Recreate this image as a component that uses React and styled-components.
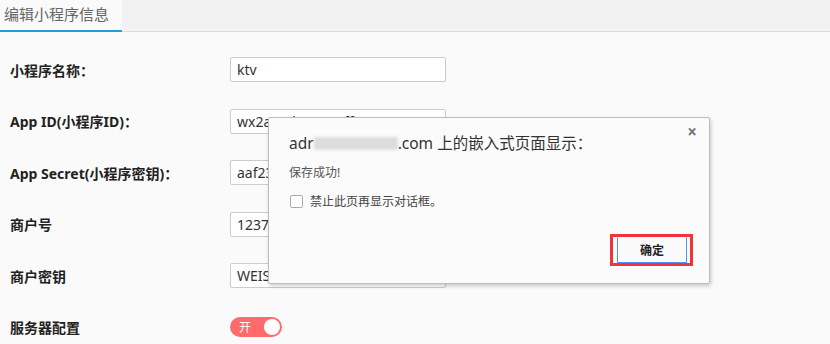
import React from 'react'
import styled, { createGlobalStyle } from 'styled-components'

const GlobalStyle = createGlobalStyle`
  html, body {
    margin: 0;
    padding: 0;
    background: #fafafa;
    font-family: 'Noto Sans', 'Noto Sans CJK SC', sans-serif;
  }
`

const Page = styled.div`
  position: relative;
  width: 830px;
  height: 344px;
  overflow: hidden;
  background: #fafafa;
`

const TabBar = styled.div`
  display: flex;
  height: 31px;
  background: #f2f2f2;
  border-bottom: 1px solid #dcdcdc;
`

const Tab = styled.div`
  width: 118px;
  padding-left: 4px;
  font-size: 15px;
  line-height: 29px;
  color: #666;
  background: ${props => (props.active ? '#fafafa' : 'transparent')};
  border-bottom: ${props => (props.active ? '2px solid #1e9fd8' : 'none')};
  margin-bottom: -1px;
`

const Form = styled.div`
  display: grid;
  grid-template-columns: 220px 216px;
  grid-auto-rows: 25px;
  row-gap: 26.6px;
  padding: 25px 0 0 10px;
`

const Label = styled.div`
  display: flex;
  align-items: center;
  font-size: 14px;
  font-weight: bold;
  color: #222;
  white-space: nowrap;
`

const Input = styled.div`
  box-sizing: border-box;
  height: 25px;
  border: 1px solid #ccc;
  border-radius: 2px;
  background: #fff;
  padding: 0 6px;
  font-size: 14px;
  line-height: 23px;
  color: #333;
  white-space: nowrap;
  overflow: hidden;
`

const Switch = styled.div`
  align-self: center;
  display: flex;
  align-items: center;
  justify-content: space-between;
  box-sizing: border-box;
  width: 52px;
  height: 20px;
  border-radius: 10px;
  background: #ff6b6b;
  padding: 0 2px 0 9px;
  color: #fff;
  font-size: 12px;
`

const Knob = styled.span`
  width: 16px;
  height: 16px;
  border-radius: 50%;
  background: #fff;
`

const Dialog = styled.div`
  position: absolute;
  left: 268px;
  top: 117px;
  box-sizing: border-box;
  width: 442px;
  height: 167px;
  background: #fbfbfb;
  border: 1px solid #bdbdbd;
  border-radius: 2px;
  box-shadow: 1px 2px 4px rgba(0, 0, 0, 0.2);
  padding: 14px 16px 0 20px;
  display: flex;
  flex-direction: column;
`

const Close = styled.div`
  position: absolute;
  right: 12px;
  top: 2px;
  font-size: 17px;
  font-weight: bold;
  color: #777;
`

const Title = styled.div`
  font-size: 15.5px;
  color: #333;
  line-height: 22px;
  white-space: nowrap;
`

const Blur = styled.span`
  display: inline-block;
  width: 84px;
  height: 13px;
  vertical-align: -1px;
  background: #dcdcdc;
  filter: blur(1.5px);
`

const Message = styled.div`
  margin-top: 9px;
  font-size: 12px;
  color: #555;
`

const CheckRow = styled.label`
  display: flex;
  align-items: center;
  gap: 7px;
  margin-top: 11px;
  font-size: 12px;
  color: #444;
`

const CheckBox = styled.span`
  box-sizing: border-box;
  width: 13px;
  height: 13px;
  margin-left: 1px;
  border: 1px solid #aaa;
  border-radius: 2px;
  background: #fff;
`

const Footer = styled.div`
  display: flex;
  justify-content: flex-end;
  margin-top: 24px;
`

const Mark = styled.div`
  border: 3px solid #f0343a;
  padding: 0 3px 0 4px;
`

const Button = styled.div`
  box-sizing: border-box;
  width: 70px;
  height: 26px;
  border: 1px solid #4d90fe;
  border-top-color: transparent;
  background: #fafafa;
  font-size: 12px;
  font-weight: bold;
  color: #222;
  display: flex;
  align-items: center;
  justify-content: center;
`

const fields = [
  ['小程序名称：', 'ktv'],
  ['App ID(小程序ID)：', 'wx2a80d169915ff874'],
  ['App Secret(小程序密钥)：', 'aaf23'],
  ['商户号', '12372'],
  ['商户密钥', 'WEIS'],
]

const App = () => (
  <Page>
    <GlobalStyle />
    <TabBar>
      <Tab active>编辑小程序信息</Tab>
    </TabBar>
    <Form>
      {fields.map(([label, value], i) => (
        <React.Fragment key={i}>
          <Label>{label}</Label>
          <Input>{value}</Input>
        </React.Fragment>
      ))}
      <Label>服务器配置</Label>
      <Switch>
        开
        <Knob />
      </Switch>
    </Form>
    <Dialog>
      <Close>×</Close>
      <Title>
        adr
        <Blur />
        .com 上的嵌入式页面显示：
      </Title>
      <Message>保存成功!</Message>
      <CheckRow>
        <CheckBox />
        禁止此页再显示对话框。
      </CheckRow>
      <Footer>
        <Mark>
          <Button>确定</Button>
        </Mark>
      </Footer>
    </Dialog>
  </Page>
)

export default App
